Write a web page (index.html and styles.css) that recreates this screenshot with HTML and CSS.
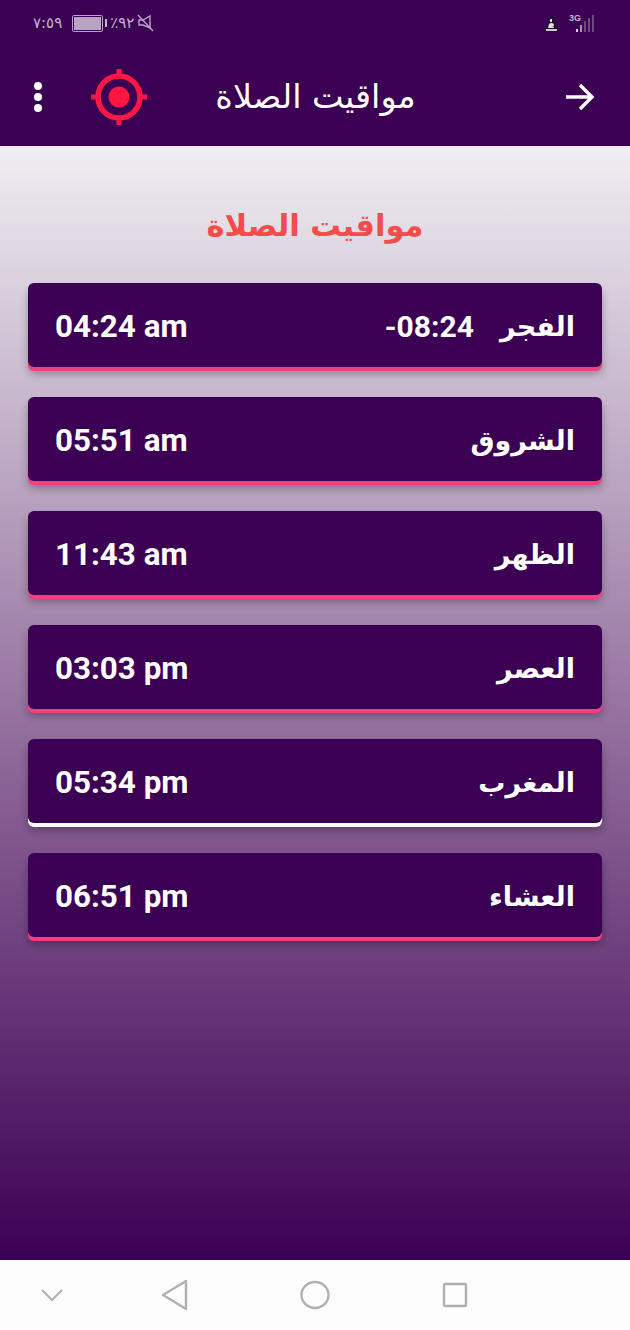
FILE: index.html
```html
<!DOCTYPE html>
<html>
<head>
  <meta charset="utf-8">
  <title>مواقيت الصلاة</title>
  <link rel="stylesheet" href="styles.css">
</head>
<body>
  <header class="top">
    <div class="status-bar">
      <div class="status-left">
        <span class="clock">٧:٥٩</span>
        <span class="battery"><span class="battery-fill"></span></span>
        <span class="battery-nub"></span>
        <span class="percent">٪٩٢</span>
        <svg class="mute" width="17" height="18" viewBox="0 0 17 18">
          <path d="M2 6h4l7-4v12l-7-3H2z" fill="none" stroke="#b9a3c4" stroke-width="1.4"/>
          <path d="M1 1l15 16" stroke="#b9a3c4" stroke-width="1.4"/>
        </svg>
      </div>
      <div class="status-right">
        <svg class="app-icon" width="15" height="17" viewBox="0 0 15 17">
          <path d="M1 16l3-9 3-6h3l4 15z" fill="#1d1420"/>
          <path d="M6 3h2v3H6zM5 8c2-2 5-1 5 1s-2 2-4 2h4v1H4z" fill="#e2dde6"/>
          <path d="M2 13h11v2H2z" fill="#cfc8d6"/>
        </svg>
        <span class="net">3G</span>
        <svg class="signal" width="19" height="19" viewBox="0 0 19 19">
          <rect x="1" y="15" width="2" height="3" fill="#d8cfe0"/>
          <rect x="5" y="11" width="2" height="7" fill="#a98fba"/>
          <rect x="9" y="7" width="2" height="11" fill="#6e4a85"/>
          <rect x="13" y="4" width="2" height="14" fill="#6e4a85"/>
          <rect x="17" y="1" width="2" height="17" fill="#6e4a85"/>
        </svg>
      </div>
    </div>
    <div class="toolbar">
      <div class="dots"><i></i><i></i><i></i></div>
      <svg class="target" width="58" height="58" viewBox="0 0 58 58">
        <circle cx="29" cy="29" r="21" fill="none" stroke="#ff1744" stroke-width="5.5"/>
        <circle cx="29" cy="29" r="10.5" fill="#ff1744"/>
        <path d="M29 1v9M29 48v9M1 29h9M48 29h9" stroke="#ff1744" stroke-width="5"/>
      </svg>
      <div class="toolbar-title">مواقيت الصلاة</div>
      <svg class="back" width="30" height="28" viewBox="0 0 30 28">
        <path d="M1 14h26M15 2l12 12-12 12" fill="none" stroke="#fff" stroke-width="3.4"/>
      </svg>
    </div>
  </header>

  <main class="content">
    <h1 class="heading">مواقيت الصلاة</h1>
    <div class="prayer-list">
      <div class="prayer">
        <span class="time">04:24 am</span>
        <span class="remain">-08:24</span>
        <span class="name">الفجر</span>
      </div>
      <div class="prayer">
        <span class="time">05:51 am</span>
        <span class="name">الشروق</span>
      </div>
      <div class="prayer">
        <span class="time">11:43 am</span>
        <span class="name">الظهر</span>
      </div>
      <div class="prayer">
        <span class="time">03:03 pm</span>
        <span class="name">العصر</span>
      </div>
      <div class="prayer current">
        <span class="time">05:34 pm</span>
        <span class="name">المغرب</span>
      </div>
      <div class="prayer">
        <span class="time">06:51 pm</span>
        <span class="name">العشاء</span>
      </div>
    </div>
  </main>

  <footer class="nav-bar">
    <svg width="24" height="14" viewBox="0 0 24 14">
      <path d="M2 2l10 10L22 2" fill="none" stroke="#b0b0b0" stroke-width="2"/>
    </svg>
    <svg width="28" height="32" viewBox="0 0 28 32">
      <path d="M25 2v28L2 16z" fill="none" stroke="#b0b0b0" stroke-width="2.4" stroke-linejoin="round"/>
    </svg>
    <svg width="30" height="30" viewBox="0 0 30 30">
      <ellipse cx="15" cy="15" rx="13.5" ry="13" fill="none" stroke="#b0b0b0" stroke-width="2.4"/>
    </svg>
    <svg width="26" height="26" viewBox="0 0 26 26">
      <rect x="2" y="2" width="22" height="22" rx="1.5" fill="none" stroke="#b0b0b0" stroke-width="2.4"/>
    </svg>
  </footer>
</body>
</html>
```

FILE: styles.css
```css
html, body {
  height: 100%;
}

body {
  margin: 0;
  display: flex;
  flex-direction: column;
  min-height: 1330px;
  font-family: "DejaVu Sans", sans-serif;
  background-color: #fdfdfd;
}

.top {
  background-color: #3b0054;
  height: 146px;
  flex-shrink: 0;
}

.status-bar {
  height: 46px;
  display: flex;
  justify-content: space-between;
  align-items: center;
  padding: 0 36px 0 33px;
  color: #c5b3cf;
  font-size: 15px;
}

.status-left,
.status-right {
  display: flex;
  align-items: center;
}

.battery {
  display: block;
  width: 27px;
  height: 13px;
  margin-left: 10px;
  padding: 1px;
  border: 1px solid #b9a3c4;
  border-radius: 2px;
}

.battery-fill {
  display: block;
  height: 100%;
  background-color: #b9a3c4;
}

.battery-nub {
  display: block;
  width: 2px;
  height: 8px;
  margin-left: 2px;
  background-color: #c5b3cf;
}

.percent {
  margin-left: 3px;
}

.mute {
  margin-left: 3px;
}

.app-icon {
  margin-top: 3px;
  margin-right: 1px;
}

.net {
  font-family: "Liberation Sans", sans-serif;
  font-size: 9px;
  font-weight: bold;
  margin: -10px -6px 0 9px;
}

.toolbar {
  height: 99px;
  padding: 1px 35px 0 34px;
  display: flex;
  align-items: center;
  color: white;
}

.dots {
  display: flex;
  flex-direction: column;
  gap: 3px;
  width: 10px;
}

.dots i {
  display: block;
  width: 8px;
  height: 8px;
  border-radius: 50%;
  background-color: white;
}

.target {
  margin-left: 46px;
}

.toolbar-title {
  flex: 1;
  text-align: center;
  font-size: 33.5px;
  padding-right: 82px;
}

.content {
  flex: 1;
  padding: 0 28px;
  background: linear-gradient(to bottom, #f0eef2, #7c5089 65%, #3b0054);
}

.heading {
  margin: 56px 0 33px;
  text-align: center;
  color: #f44b4b;
  font-size: 30.5px;
  line-height: 48px;
  font-weight: bold;
}

.prayer-list {
  display: flex;
  flex-direction: column;
  gap: 30px;
}

.prayer {
  box-sizing: border-box;
  height: 84px;
  display: flex;
  align-items: center;
  padding: 3px 27px 0;
  background-color: #3b0054;
  color: white;
  border-radius: 6px;
  font-weight: bold;
  font-size: 27px;
  box-shadow: 0 4px 0 #f2407f, 0 7px 8px rgba(0, 0, 0, 0.3);
}

.prayer.current {
  box-shadow: 0 4px 0 white, 0 7px 8px rgba(0, 0, 0, 0.3);
}

.time,
.remain {
  font-family: Roboto, sans-serif;
}

.time {
  font-size: 31.4px;
  margin-right: auto;
}

.remain {
  font-size: 30px;
  margin-right: 26px;
}

.nav-bar {
  height: 70px;
  flex-shrink: 0;
  display: flex;
  align-items: center;
  padding-left: 40px;
  background-color: #fdfdfd;
}

.nav-bar svg:nth-child(2) {
  margin-left: 97px;
}

.nav-bar svg:nth-child(3) {
  margin-left: 111px;
}

.nav-bar svg:nth-child(4) {
  margin-left: 112px;
}
```
